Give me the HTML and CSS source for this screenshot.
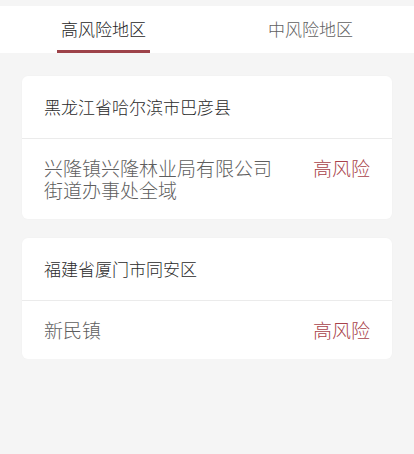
FILE: index.html
```html
<!DOCTYPE html>
<html lang="zh-CN">
<head>
<meta charset="utf-8">
<title>风险地区</title>
<link rel="stylesheet" href="styles.css">
</head>
<body>
<nav class="tabs">
  <div class="tab active"><span class="tab-label">高风险地区</span></div>
  <div class="tab"><span class="tab-label">中风险地区</span></div>
</nav>
<main class="list">
  <section class="card">
    <div class="card-head">黑龙江省哈尔滨市巴彦县</div>
    <div class="card-row">
      <div class="place">兴隆镇兴隆林业局有限公司街道办事处全域</div>
      <div class="level">高风险</div>
    </div>
  </section>
  <section class="card">
    <div class="card-head">福建省厦门市同安区</div>
    <div class="card-row">
      <div class="place">新民镇</div>
      <div class="level">高风险</div>
    </div>
  </section>
</main>
</body>
</html>
```
FILE: styles.css
```css
* { box-sizing: border-box; }
html, body {
  margin: 0;
  padding: 0;
  background: #f5f5f5;
  font-family: "Noto Sans CJK SC", "Noto Sans", sans-serif;
  font-weight: 300;
}
body { padding-top: 6px; }
.tabs {
  display: flex;
  background: #fff;
  height: 47px;
}
.tab {
  flex: 1;
  display: flex;
  justify-content: center;
  padding-top: 11px;
}
.tab-label {
  display: block;
  font-size: 17px;
  line-height: 24px;
  padding: 0 4px 9px;
  border-bottom: 3px solid transparent;
  color: #616161;
  height: 36px;
}
.tab.active .tab-label {
  color: #1e1e1e;
  border-bottom-color: #9d4249;
}
.list {
  display: flex;
  flex-direction: column;
  gap: 19px;
  padding: 23px 22px 0;
}
.card {
  background: #fff;
  border-radius: 6px;
  box-shadow: 0 0 2px rgba(0,0,0,0.03);
}
.card-head {
  font-size: 17px;
  line-height: 22px;
  padding: 20px 22px;
  color: #2a2a2a;
  border-bottom: 1px solid #ebebeb;
}
.card-row {
  display: flex;
  justify-content: space-between;
  align-items: flex-start;
  padding: 18px 22px 18px;
  font-size: 19px;
  line-height: 22px;
}
.place {
  color: #5e5e5e;
  max-width: 232px;
}
.level {
  color: #a8424a;
  flex: none;
}
```
